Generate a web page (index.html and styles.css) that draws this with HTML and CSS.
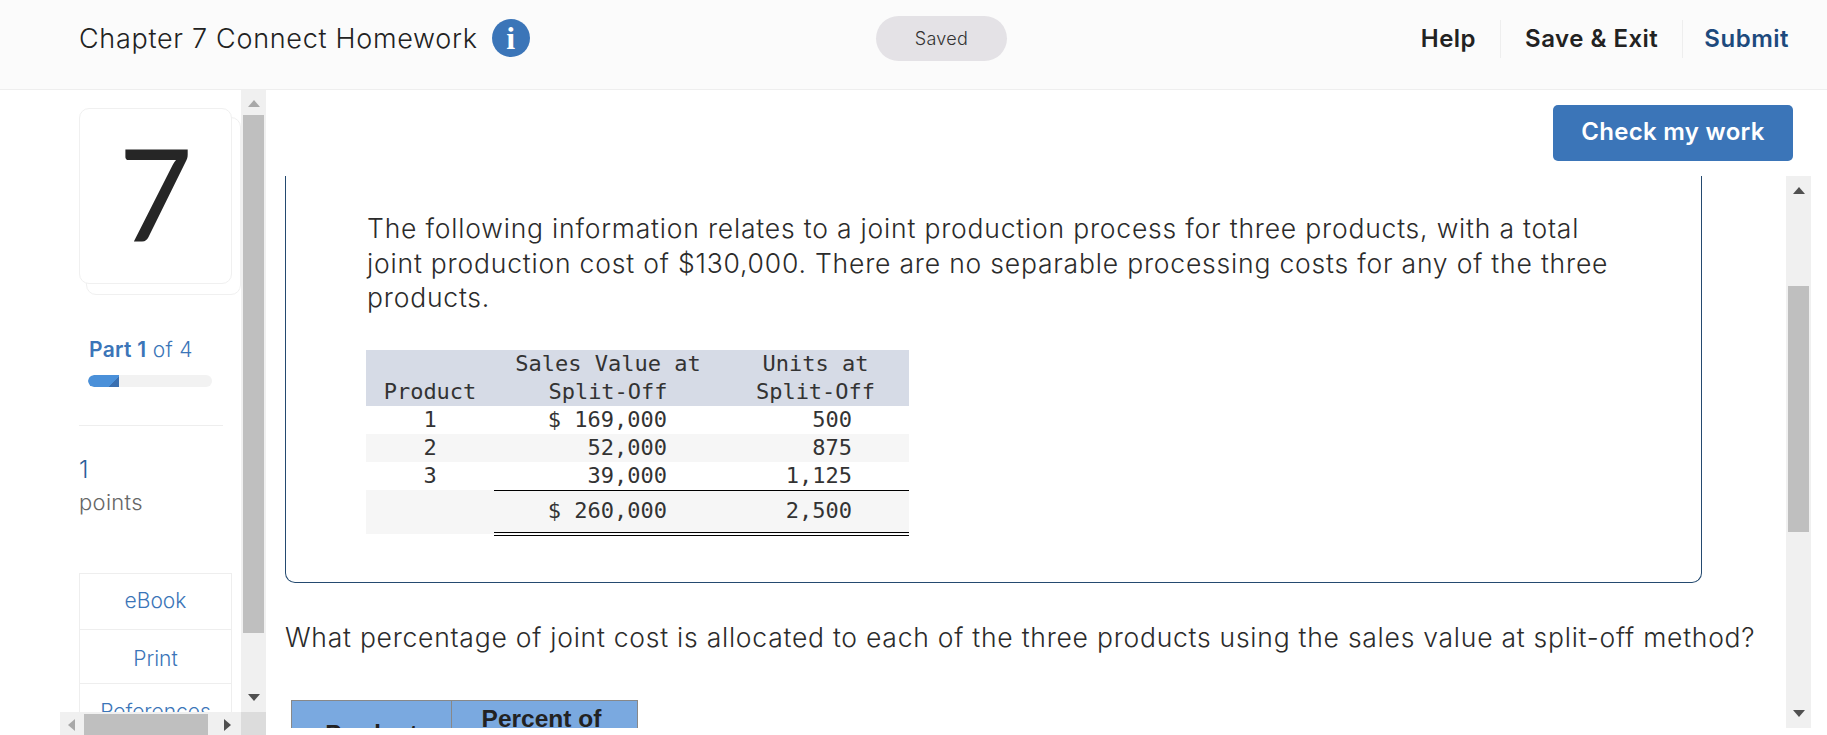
FILE: index.html
```html
<!DOCTYPE html>
<html lang="en">
<head>
    <meta charset="UTF-8">
    <title>Chapter 7 Connect Homework</title>
    <link rel="stylesheet" href="styles.css">
</head>
<body>
    <header class="topbar">
        <div class="title-group">
            <h1 class="title">Chapter 7 Connect Homework</h1>
            <span class="info-icon">i</span>
        </div>
        <div class="saved-pill">Saved</div>
        <nav class="top-links">
            <a class="top-link">Help</a>
            <a class="top-link">Save &amp; Exit</a>
            <a class="top-link submit">Submit</a>
        </nav>
    </header>

    <div class="page">
        <aside class="side">
            <div class="side-content">
                <div class="question-card">
                    <div class="question-number">7</div>
                </div>
                <div class="part-label"><b>Part 1</b> of 4</div>
                <div class="progress"><div class="progress-fill"></div></div>
                <div class="points-block">
                    <div class="points-value">1</div>
                    <div class="points-label">points</div>
                </div>
                <ul class="tools">
                    <li class="tool tool-ebook">eBook</li>
                    <li class="tool tool-print">Print</li>
                    <li class="tool tool-refs">References</li>
                </ul>
            </div>
            <div class="vbar side-vbar">
                <span class="arrow up light"></span>
                <div class="vbar-track"><div class="vbar-thumb side-thumb"></div></div>
                <span class="arrow down"></span>
            </div>
            <div class="hbar">
                <span class="arrow left"></span>
                <div class="hbar-thumb"></div>
                <span class="arrow right"></span>
            </div>
            <div class="corner"></div>
        </aside>

        <main class="main">
            <div class="check-row">
                <button class="check-button">Check my work</button>
            </div>
            <div class="scroller">
                <div class="scroll-body">
                    <section class="problem-box">
                        <p class="problem-text">The following information relates to a joint production process for three products, with a total joint production cost of $130,000. There are no separable processing costs for any of the three products.</p>
                        <table class="data-table">
                            <thead>
                                <tr>
                                    <th class="col-product">Product</th>
                                    <th class="col-sales">Sales Value at<br>Split-Off</th>
                                    <th class="col-units">Units at<br>Split-Off</th>
                                </tr>
                            </thead>
                            <tbody>
                                <tr><td class="center">1</td><td class="num-a">$ 169,000</td><td class="num-b">500</td></tr>
                                <tr class="shaded"><td class="center">2</td><td class="num-a">52,000</td><td class="num-b">875</td></tr>
                                <tr><td class="center">3</td><td class="num-a">39,000</td><td class="num-b">1,125</td></tr>
                                <tr class="shaded total"><td></td><td class="num-a">$ 260,000</td><td class="num-b">2,500</td></tr>
                            </tbody>
                        </table>
                    </section>
                    <p class="ask-text">What percentage of joint cost is allocated to each of the three products using the sales value at split-off method?</p>
                    <table class="answer-table">
                        <tr>
                            <th class="ans-product">Product</th>
                            <th class="ans-percent">Percent of<br>Joint Cost</th>
                        </tr>
                    </table>
                </div>
                <div class="vbar main-vbar">
                    <span class="arrow up"></span>
                    <div class="vbar-track"><div class="vbar-thumb main-thumb"></div></div>
                    <span class="arrow down"></span>
                </div>
            </div>
        </main>
    </div>
</body>
</html>
```

FILE: styles.css
```css
* {
    box-sizing: border-box;
}

body {
    margin: 0;
    height: 735px;
    overflow: hidden;
    background-color: #fff;
    color: #2b2b2b;
    font-family: 'Inter', sans-serif;
    font-weight: 300;
}

/* top bar */
.topbar {
    height: 90px;
    padding: 0 38px 13px 79px;
    display: grid;
    grid-template-columns: 797px 131px 1fr;
    align-items: center;
    background-color: #fbfbfb;
    border-bottom: 1px solid #eeeeee;
}

.title-group {
    display: flex;
    align-items: center;
    gap: 14px;
}

.title {
    margin: 0;
    font-size: 27px;
    font-weight: 300;
    letter-spacing: 0.7px;
    color: #222;
}

.info-icon {
    width: 38px;
    height: 38px;
    border-radius: 50%;
    background-color: #3b75b8;
    color: #fff;
    font-family: 'Liberation Serif', serif;
    font-weight: bold;
    font-size: 32px;
    line-height: 38px;
    text-align: center;
}

.saved-pill {
    height: 45px;
    margin-top: 1px;
    border-radius: 23px;
    background-color: #e4e2e6;
    text-align: center;
    line-height: 45px;
    font-size: 18px;
    letter-spacing: 0.3px;
    color: #333;
}

.top-links {
    display: flex;
    justify-content: flex-end;
    align-items: center;
    margin-top: 2px;
}

.top-link {
    height: 38px;
    line-height: 38px;
    padding: 0 24px;
    font-size: 24px;
    font-weight: 600;
    letter-spacing: 0.5px;
    color: #222;
    border-right: 1px solid #eee;
}

.top-link.submit {
    padding: 0 0 0 21px;
    border-right: none;
    color: #1d4a7d;
}

/* page */
.page {
    display: flex;
    height: 645px;
}

.side {
    width: 266px;
    display: grid;
    grid-template-columns: 241px 25px;
    grid-template-rows: 622px 23px;
}

.side-content {
    padding: 18px 0 0 79px;
    overflow: hidden;
}

.question-card {
    position: relative;
    width: 153px;
    height: 176px;
    background-color: #fff;
    border: 1px solid #f0f0f0;
    border-radius: 10px;
    text-align: center;
}

.question-card::before {
    content: '';
    position: absolute;
    z-index: -1;
    left: 6px;
    top: 8px;
    width: 153px;
    height: 176px;
    border: 1px solid #f0f0f0;
    border-radius: 10px;
}

.question-number {
    font-family: 'Lato', sans-serif;
    font-weight: 400;
    font-size: 128px;
    line-height: 166px;
    color: #262626;
}

.part-label {
    margin: 54px 0 0 10px;
    font-size: 21px;
    letter-spacing: 0.3px;
    line-height: 24px;
    color: #3b75b8;
}

.part-label b {
    font-weight: 600;
}

.progress {
    width: 124px;
    height: 12px;
    margin: 13px 0 0 9px;
    border-radius: 6px;
    background-color: #f2f2f2;
    overflow: hidden;
}

.progress-fill {
    width: 31px;
    height: 12px;
    border-radius: 6px 0 0 6px;
    background: linear-gradient(135deg, #4a90d9 75%, #3a6fb0 75%);
}

.points-block {
    width: 144px;
    margin-top: 38px;
    padding-top: 29px;
    border-top: 1px solid #eeeeee;
}

.points-value {
    font-size: 24px;
    line-height: 30px;
    color: #2a6099;
}

.points-label {
    margin-top: 2px;
    font-size: 22px;
    letter-spacing: 0.3px;
    line-height: 30px;
    color: #666;
}

.tools {
    list-style: none;
    width: 153px;
    margin: 56px 0 0 0;
    padding: 0;
    border-top: 1px solid #eeeeee;
    border-left: 1px solid #eeeeee;
    border-right: 1px solid #eeeeee;
}

.tool {
    text-align: center;
    font-size: 21px;
    color: #3b75b8;
    border-bottom: 1px solid #eeeeee;
}

.tool-ebook {
    height: 56px;
    line-height: 54px;
}

.tool-print {
    height: 54px;
    line-height: 58px;
}

.tool-refs {
    height: 54px;
    line-height: 56px;
}

/* fake scrollbars */
.vbar {
    width: 25px;
    display: flex;
    flex-direction: column;
    align-items: center;
    background-color: #f0f0f0;
}

.vbar-track {
    flex: 1;
    width: 100%;
    padding: 0 2px;
}

.vbar-thumb {
    background-color: #bfbfbf;
}

.side-vbar {
    padding: 10px 0 11px;
}

.side-vbar .vbar-track {
    margin: 8px 0 8px;
}

.side-thumb {
    height: 518px;
}

.main-vbar {
    padding: 11px 0;
}

.main-vbar .vbar-track {
    margin: 8px 0;
    padding-top: 84px;
}

.main-thumb {
    height: 246px;
}

.arrow {
    display: block;
    width: 0;
    height: 0;
    flex: none;
}

.arrow.up {
    border-left: 6px solid transparent;
    border-right: 6px solid transparent;
    border-bottom: 7px solid #505050;
}

.arrow.up.light {
    border-bottom-color: #a8a8a8;
}

.arrow.down {
    border-left: 6px solid transparent;
    border-right: 6px solid transparent;
    border-top: 7px solid #505050;
}

.arrow.left {
    border-top: 6px solid transparent;
    border-bottom: 6px solid transparent;
    border-right: 7px solid #a8a8a8;
}

.arrow.right {
    border-top: 6px solid transparent;
    border-bottom: 6px solid transparent;
    border-left: 7px solid #505050;
}

.hbar {
    margin-left: 60px;
    padding: 2px 0 0 8px;
    display: flex;
    align-items: center;
    background-color: #f0f0f0;
}

.hbar-thumb {
    width: 124px;
    height: 21px;
    margin: 0 16px 0 9px;
    background-color: #bfbfbf;
}

.corner {
    background-color: #dcdcdc;
}

/* main column */
.main {
    flex: 1;
    padding-left: 19px;
}

.check-row {
    height: 86px;
    padding: 15px 34px 0 0;
    display: flex;
    justify-content: flex-end;
    align-items: flex-start;
}

.check-button {
    width: 240px;
    height: 56px;
    padding: 0 0 3px;
    border: none;
    border-radius: 5px;
    background-color: #3b75b8;
    color: #fff;
    font-family: 'Inter', sans-serif;
    font-size: 24px;
    letter-spacing: 0.3px;
    font-weight: 600;
}

.scroller {
    width: 1526px;
    height: 552px;
    display: flex;
}

.scroll-body {
    flex: 1;
    overflow: hidden;
}

.problem-box {
    width: 1417px;
    height: 407px;
    padding: 35px 0 0 81px;
    border: 1px solid #244a70;
    border-top: none;
    border-radius: 0 0 10px 10px;
}

.problem-text {
    margin: 0;
    max-width: 1260px;
    font-size: 26.5px;
    letter-spacing: 0.8px;
    line-height: 34.5px;
}

.data-table {
    width: 543px;
    margin: 35px 0 0 -1px;
    border-collapse: collapse;
    table-layout: fixed;
    font-family: 'DejaVu Sans Mono', monospace;
    font-weight: 400;
    font-size: 22px;
    line-height: 28px;
    color: #333;
}

.data-table th {
    padding: 0;
    font-weight: 400;
    background-color: #d6dbe6;
    vertical-align: bottom;
}

.data-table td {
    height: 28px;
    padding: 0;
}

.col-product {
    width: 128px;
}

.col-sales {
    width: 228px;
}

.center {
    text-align: center;
}

.num-a {
    text-align: right;
    padding-right: 55px !important;
}

.num-b {
    text-align: right;
    padding-right: 57px !important;
}

.shaded {
    background-color: #f6f6f6;
}

.data-table .total td {
    height: 44px;
}

.data-table .total td + td {
    border-top: 1px solid #000;
    border-bottom: 4px double #000;
}

.ask-text {
    margin: 0;
    padding-top: 37px;
    font-size: 26.5px;
    letter-spacing: 0.75px;
    line-height: 34px;
    white-space: nowrap;
}

.answer-table {
    margin: 46px 0 0 6px;
    width: 347px;
    border: 1px solid #888;
    border-collapse: collapse;
    table-layout: fixed;
    font-family: 'Liberation Sans', sans-serif;
    font-size: 24.5px;
    line-height: 25px;
    color: #222;
}

.answer-table th {
    padding: 5px 0 0;
    background-color: #7aa9e0;
    border: 1px solid #888;
    border-bottom: none;
}

.answer-table .ans-percent {
    padding-right: 6px;
}

.answer-table .ans-product {
    width: 160px;
    padding-top: 10px;
}
```
